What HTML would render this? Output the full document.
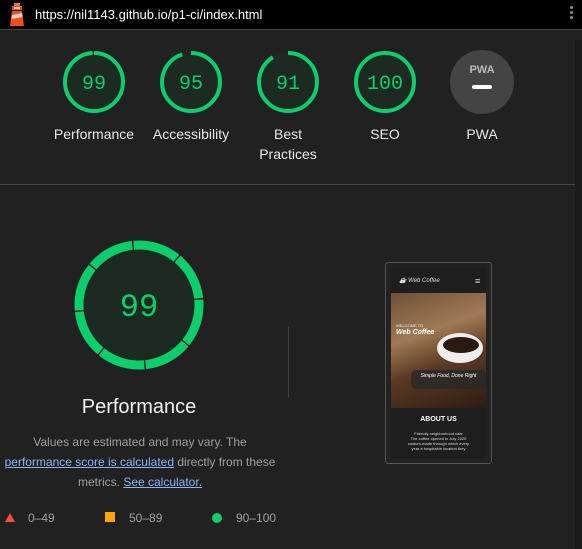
<!DOCTYPE html>
<html><head><meta charset="utf-8"><style>
body{margin:0;width:582px;height:549px;background:#212121;overflow:hidden;font-family:"Liberation Sans",sans-serif;position:relative}
.hdr{position:absolute;left:0;top:0;width:582px;height:29px;background:#000;border-bottom:1px solid #444}
.url{position:absolute;left:35px;top:7px;color:#fff;font-size:13px}
.lbl{position:absolute;color:#e8e8e8;font-size:14px;text-align:center;width:100px;line-height:20px}
.t{position:absolute;color:#a0a0a0;font-size:12px}
a{color:#8ab4f8;text-decoration:underline}
</style></head><body>
<div class="hdr">
<svg style="position:absolute;left:8px;top:2px" width="18" height="25" viewBox="0 0 18 25"><rect x="6" y="1" width="6" height="3" fill="#f96d3c"/><rect x="4" y="4" width="10" height="4" fill="#f44b21"/><rect x="6" y="5" width="6" height="2" fill="#fde2b0"/><polygon points="4,9 14,9 16,24 2,24" fill="#f44b21"/><polygon points="4,13 14,11 14.5,15 3.5,17" fill="#fbd0b0"/></svg>
<div class="url">https://nil1143.github.io/p1-ci/index.html</div>
<div style="position:absolute;left:570px;top:6px;width:3px;height:3px;background:#888;border-radius:2px;box-shadow:0 5px #888,0 10px #888"></div>
</div>
<div style="position:absolute;left:575px;top:40px;width:7px;height:509px;background:#1b1b1b"></div>
<svg style="position:absolute;left:0;top:30px" width="582" height="160">
<g font-family="Liberation Mono,monospace" font-size="20" fill="#0cce6b" text-anchor="middle">
<circle cx="94" cy="52" r="29" fill="#1d2a22" stroke="#0cce6b" stroke-width="4" stroke-dasharray="180.4 2" transform="rotate(-90 94 52)"/>
<text x="94" y="59">99</text>
<circle cx="191" cy="52" r="29" fill="#1d2a22" stroke="#0cce6b" stroke-width="4" stroke-dasharray="173 9" transform="rotate(-90 191 52)"/>
<text x="191" y="59">95</text>
<circle cx="288" cy="52" r="29" fill="#1d2a22" stroke="#0cce6b" stroke-width="4" stroke-dasharray="166 16" transform="rotate(-90 288 52)"/>
<text x="288" y="59">91</text>
<circle cx="385" cy="52" r="29" fill="#1d2a22" stroke="#0cce6b" stroke-width="4"/>
<text x="385" y="59">100</text>
</g>
<circle cx="482" cy="52" r="32" fill="#444"/>
<text x="482" y="43" font-family="Liberation Sans,sans-serif" font-weight="bold" font-size="11" fill="#bbb" text-anchor="middle">PWA</text>
<rect x="472" y="55" width="20" height="4" rx="2" fill="#fff"/>
</svg>
<div class="lbl" style="left:44px;top:124px">Performance</div>
<div class="lbl" style="left:141px;top:124px">Accessibility</div>
<div class="lbl" style="left:238px;top:124px">Best<br>Practices</div>
<div class="lbl" style="left:335px;top:124px">SEO</div>
<div class="lbl" style="left:432px;top:124px">PWA</div>
<div style="position:absolute;left:0;top:184px;width:575px;height:1px;background:#444"></div>
<svg style="position:absolute;left:70px;top:236px" width="140" height="140">
<circle cx="69" cy="69" r="60" fill="#1d2a22" stroke="#0cce6b" stroke-width="9" stroke-dasharray="45.6 1.5" transform="rotate(-95 69 69)"/>
<text x="69" y="80" font-family="Liberation Mono,monospace" font-size="32" fill="#0cce6b" text-anchor="middle">99</text>
</svg>
<div style="position:absolute;left:39px;top:396px;width:200px;text-align:center;color:#f0f0f0;font-size:20px">Performance</div>
<div class="t" style="left:0;top:432px;width:280px;text-align:center;line-height:20px">Values are estimated and may vary. The<br><a>performance score is calculated</a> directly from these<br>metrics. <a>See calculator.</a></div>
<div style="position:absolute;left:288px;top:327px;width:1px;height:70px;background:#444"></div>
<svg style="position:absolute;left:4px;top:512px" width="12" height="12"><polygon points="6,1 11,10 1,10" fill="#ff4e42"/></svg>
<div class="t" style="left:28px;top:511px">0–49</div>
<div style="position:absolute;left:105px;top:512px;width:10px;height:10px;background:#ffa400"></div>
<div class="t" style="left:129px;top:511px">50–89</div>
<div style="position:absolute;left:212px;top:513px;width:10px;height:10px;border-radius:5px;background:#0cce6b"></div>
<div class="t" style="left:236px;top:511px">90–100</div>
<div style="position:absolute;left:385px;top:262px;width:105px;height:200px;border:1px solid #555;border-radius:3px;background:#222;overflow:hidden">
<div style="position:absolute;left:5px;top:5px;width:95px;height:190px;background:#1e1e1e">
<div style="position:absolute;left:8px;top:9px;color:#ddd;font-size:6px;font-style:italic">☕ Web Coffee</div>
<div style="position:absolute;left:84px;top:8px;color:#ddd;font-size:9px">≡</div>
<div style="position:absolute;left:0;top:25px;width:95px;height:115px;background:linear-gradient(160deg,#6e5038 0%,#a07a55 35%,#5a3a24 60%,#2e1c12 100%)">
<div style="position:absolute;left:46px;top:40px;width:46px;height:30px;border-radius:50%;background:#eee"></div>
<div style="position:absolute;left:52px;top:44px;width:36px;height:16px;border-radius:50%;background:#2a1a12"></div>
<div style="position:absolute;left:5px;top:30px;color:#eee;font-size:4px">WELCOME TO</div>
<div style="position:absolute;left:5px;top:36px;color:#fff;font-size:7px;font-style:italic;font-weight:bold">Web Coffee</div>
<div style="position:absolute;left:20px;top:77px;width:75px;height:16px;background:rgba(40,40,40,.8);border-radius:5px;color:#fff;font-size:5px;text-align:center;padding-top:3px;font-style:italic">Simple Food, Done Right</div>
</div>
<div style="position:absolute;left:0;top:148px;width:95px;text-align:center;color:#fff;font-size:7px;font-weight:bold">ABOUT US</div>
<div style="position:absolute;left:0;top:163px;width:95px;text-align:center;color:#ddd;font-size:4px;line-height:5px">Friendly neighborhood cafe<br>The coffee opened in July 2020<br>custom-made through which every<br>year a hospitable location they</div>
</div></div>
</body></html>
